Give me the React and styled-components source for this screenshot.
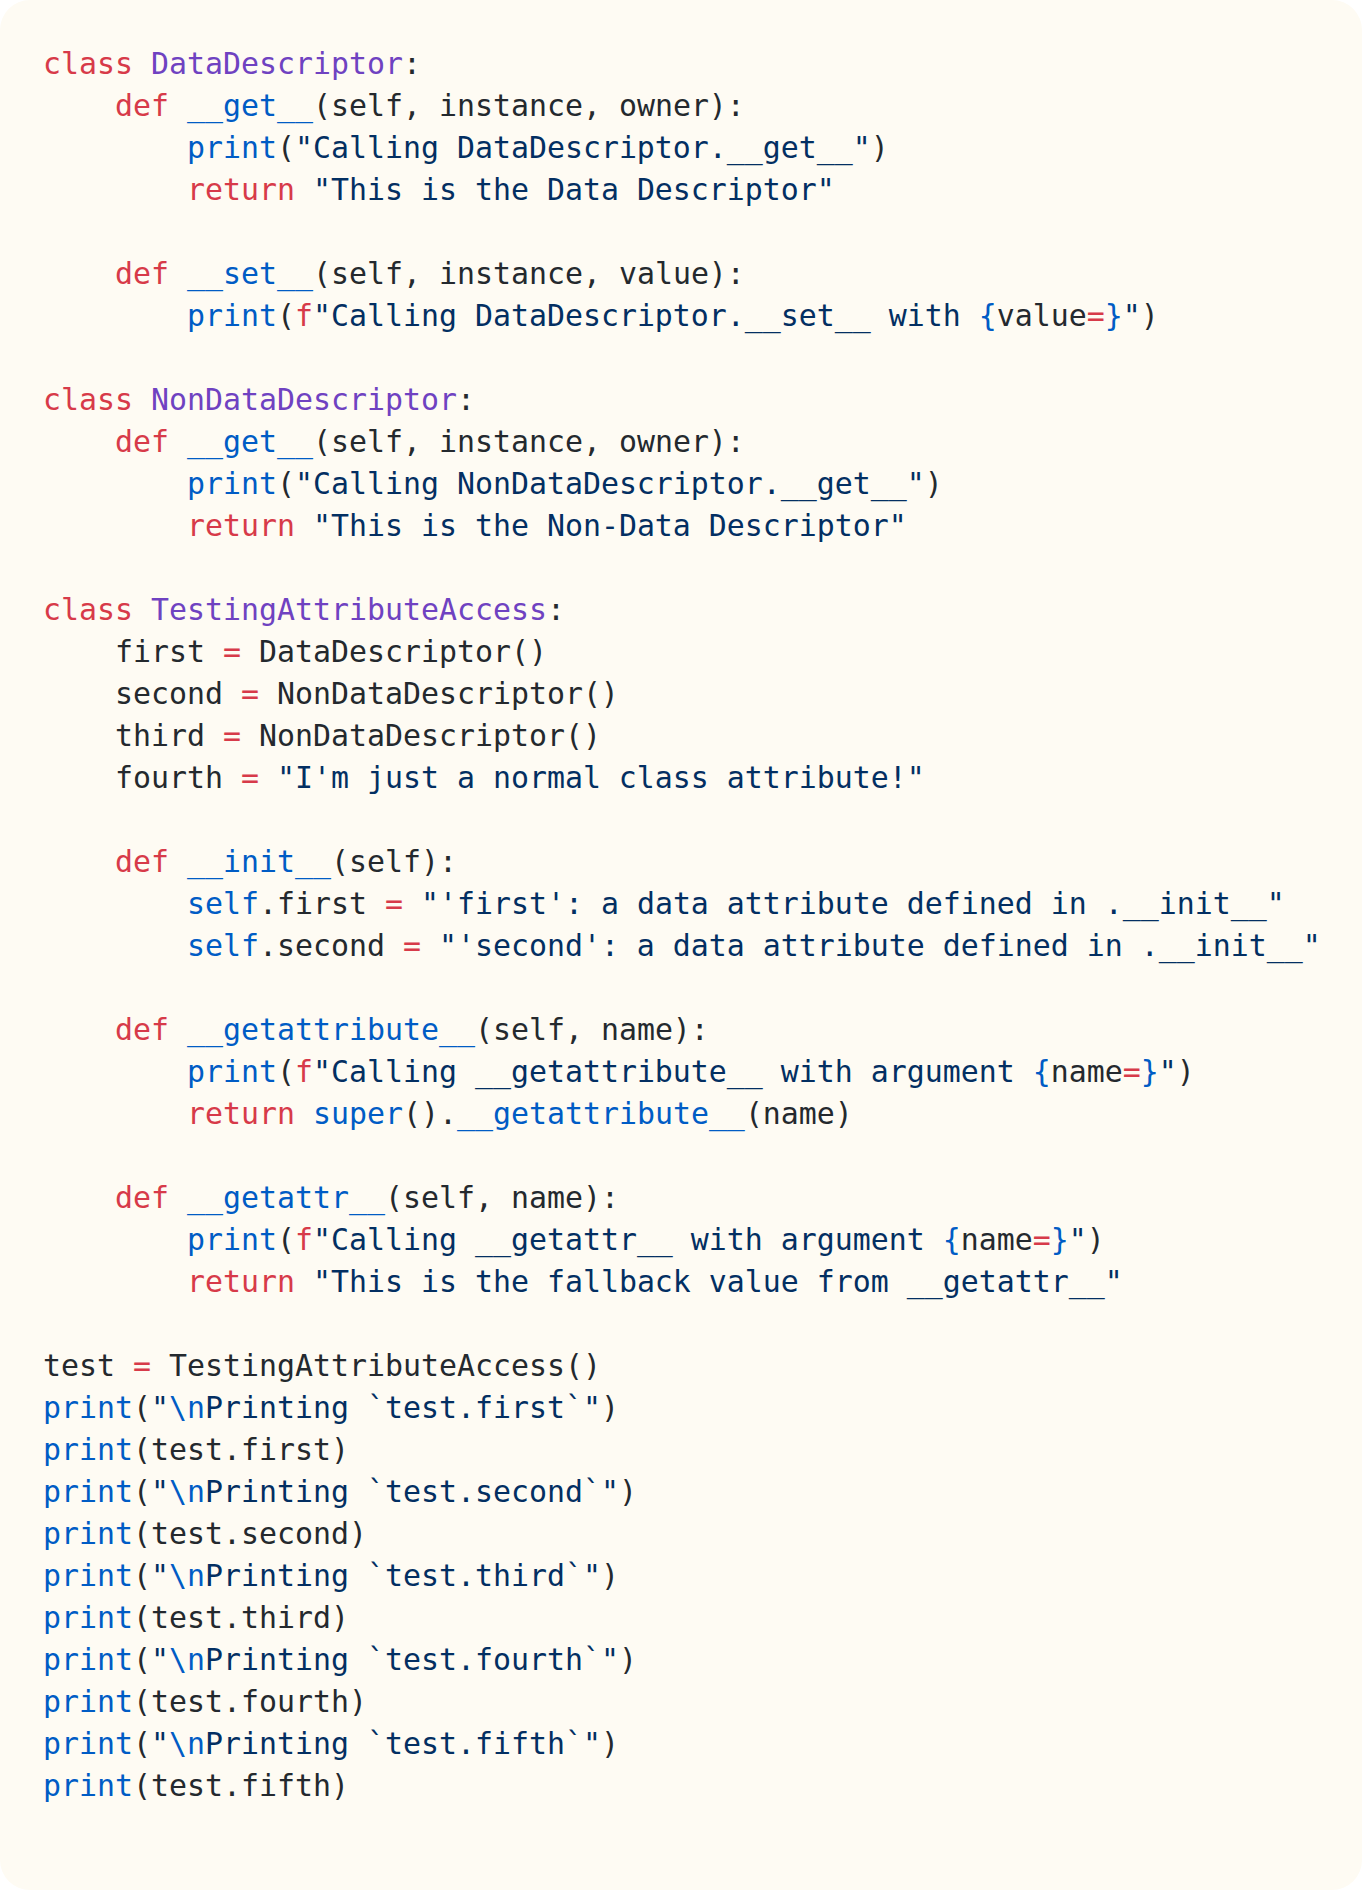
import React from "react";
import styled, { createGlobalStyle } from "styled-components";

const GlobalStyle = createGlobalStyle`
  html, body {
    margin: 0;
    padding: 0;
    background: #ffffff;
  }
`;

const colors = {
  kw: "#d73a49",
  cls: "#6f42c1",
  fn: "#005cc5",
  str: "#032f62",
  txt: "#24292e",
};

// each line is a list of [kind, text] tokens
const T = (kind, text) => ({ kind, text });
const txt = (s) => T("txt", s);
const kw = (s) => T("kw", s);
const fn = (s) => T("fn", s);
const str = (s) => T("str", s);
const cls = (s) => T("cls", s);

const lines = [
  [kw("class"), txt(" "), cls("DataDescriptor"), txt(":")],
  [txt("    "), kw("def"), txt(" "), fn("__get__"), txt("(self, instance, owner):")],
  [txt("        "), fn("print"), txt("("), str('"Calling DataDescriptor.__get__"'), txt(")")],
  [txt("        "), kw("return"), txt(" "), str('"This is the Data Descriptor"')],
  [],
  [txt("    "), kw("def"), txt(" "), fn("__set__"), txt("(self, instance, value):")],
  [txt("        "), fn("print"), txt("("), kw("f"), str('"Calling DataDescriptor.__set__ with '), fn("{"), txt("value"), kw("="), fn("}"), str('"'), txt(")")],
  [],
  [kw("class"), txt(" "), cls("NonDataDescriptor"), txt(":")],
  [txt("    "), kw("def"), txt(" "), fn("__get__"), txt("(self, instance, owner):")],
  [txt("        "), fn("print"), txt("("), str('"Calling NonDataDescriptor.__get__"'), txt(")")],
  [txt("        "), kw("return"), txt(" "), str('"This is the Non-Data Descriptor"')],
  [],
  [kw("class"), txt(" "), cls("TestingAttributeAccess"), txt(":")],
  [txt("    first "), kw("="), txt(" DataDescriptor()")],
  [txt("    second "), kw("="), txt(" NonDataDescriptor()")],
  [txt("    third "), kw("="), txt(" NonDataDescriptor()")],
  [txt("    fourth "), kw("="), txt(" "), str('"I\'m just a normal class attribute!"')],
  [],
  [txt("    "), kw("def"), txt(" "), fn("__init__"), txt("(self):")],
  [txt("        "), fn("self"), txt(".first "), kw("="), txt(" "), str('"\'first\': a data attribute defined in .__init__"')],
  [txt("        "), fn("self"), txt(".second "), kw("="), txt(" "), str('"\'second\': a data attribute defined in .__init__"')],
  [],
  [txt("    "), kw("def"), txt(" "), fn("__getattribute__"), txt("(self, name):")],
  [txt("        "), fn("print"), txt("("), kw("f"), str('"Calling __getattribute__ with argument '), fn("{"), txt("name"), kw("="), fn("}"), str('"'), txt(")")],
  [txt("        "), kw("return"), txt(" "), fn("super"), txt("()."), fn("__getattribute__"), txt("(name)")],
  [],
  [txt("    "), kw("def"), txt(" "), fn("__getattr__"), txt("(self, name):")],
  [txt("        "), fn("print"), txt("("), kw("f"), str('"Calling __getattr__ with argument '), fn("{"), txt("name"), kw("="), fn("}"), str('"'), txt(")")],
  [txt("        "), kw("return"), txt(" "), str('"This is the fallback value from __getattr__"')],
  [],
  [txt("test "), kw("="), txt(" TestingAttributeAccess()")],
  [fn("print"), txt("("), str('"'), fn("\\n"), str("Printing `test.first`\""), txt(")")],
  [fn("print"), txt("(test.first)")],
  [fn("print"), txt("("), str('"'), fn("\\n"), str("Printing `test.second`\""), txt(")")],
  [fn("print"), txt("(test.second)")],
  [fn("print"), txt("("), str('"'), fn("\\n"), str("Printing `test.third`\""), txt(")")],
  [fn("print"), txt("(test.third)")],
  [fn("print"), txt("("), str('"'), fn("\\n"), str("Printing `test.fourth`\""), txt(")")],
  [fn("print"), txt("(test.fourth)")],
  [fn("print"), txt("("), str('"'), fn("\\n"), str("Printing `test.fifth`\""), txt(")")],
  [fn("print"), txt("(test.fifth)")],
];

const App = () => {
  return (
    <React.Fragment>
      <GlobalStyle />
      <Card>
        <Code>
          {lines.map((line, i) => (
            <Line key={i}>
              {line.map((t, j) => (
                <Token key={j} $kind={t.kind}>
                  {t.text}
                </Token>
              ))}
            </Line>
          ))}
        </Code>
      </Card>
    </React.Fragment>
  );
};

const Card = styled.div`
  width: 1362px;
  height: 1890px;
  box-sizing: border-box;
  padding: 43px 0 0 43px;
  background-color: #fefbf3;
  border-radius: 30px;
  overflow: hidden;
`;

const Code = styled.pre`
  margin: 0;
  font-family: "DejaVu Sans Mono", "Liberation Mono", monospace;
  font-size: 29.9px;
  line-height: 42px;
  color: ${colors.txt};
  white-space: pre;
`;

const Line = styled.div`
  height: 42px;
`;

const Token = styled.span`
  color: ${(p) => colors[p.$kind]};
`;

export default App;
